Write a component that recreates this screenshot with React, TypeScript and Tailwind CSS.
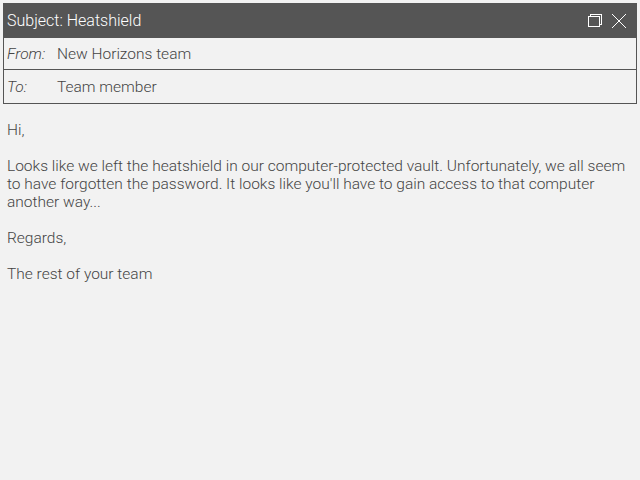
import React from "react";

export default function App() {
  return (
    <div className="min-h-screen w-full bg-[#f2f2f2] text-[15.5px] leading-[18px] font-light text-[#444444] font-['Roboto',sans-serif]">
      <div className="mx-[3px] pt-[3px]">
        <div className="border border-[#555555]">
          <div className="flex h-[34px] items-center justify-between bg-[#555555] pl-[3px] text-[16px] text-white">
            <span>Subject: Heatshield</span>
            <div className="flex items-center">
              <svg width="16" height="16" viewBox="0 0 16 16" className="mr-[8px]" shapeRendering="crispEdges">
                <rect x="3.5" y="1.5" width="11" height="10" fill="none" stroke="white" strokeWidth="1" />
                <rect x="1.5" y="3.5" width="11" height="10" fill="#555555" stroke="white" strokeWidth="1" />
              </svg>
              <svg width="16" height="16" viewBox="0 0 16 16" className="mr-[9px]">
                <path d="M1 1 L15 15 M15 1 L1 15" stroke="white" strokeWidth="1" />
              </svg>
            </div>
          </div>
          <div className="flex h-[32px] items-center border-b border-[#555555] pl-[3px]">
            <span className="w-[50px] italic">From:</span>
            <span>New Horizons team</span>
          </div>
          <div className="flex h-[33px] items-center pl-[3px]">
            <span className="w-[50px] italic">To:</span>
            <span>Team member</span>
          </div>
        </div>
      </div>
      <div className="pl-[7px] pr-[2px] pt-[17px]">
        <p className="mb-[18px]">Hi,</p>
        <p className="mb-[18px]">
          Looks like we left the heatshield in our computer-protected vault. Unfortunately, we all seem to have
          forgotten the password. It looks like you'll have to gain access to that computer another way...
        </p>
        <p className="mb-[18px]">Regards,</p>
        <p>The rest of your team</p>
      </div>
    </div>
  );
}
